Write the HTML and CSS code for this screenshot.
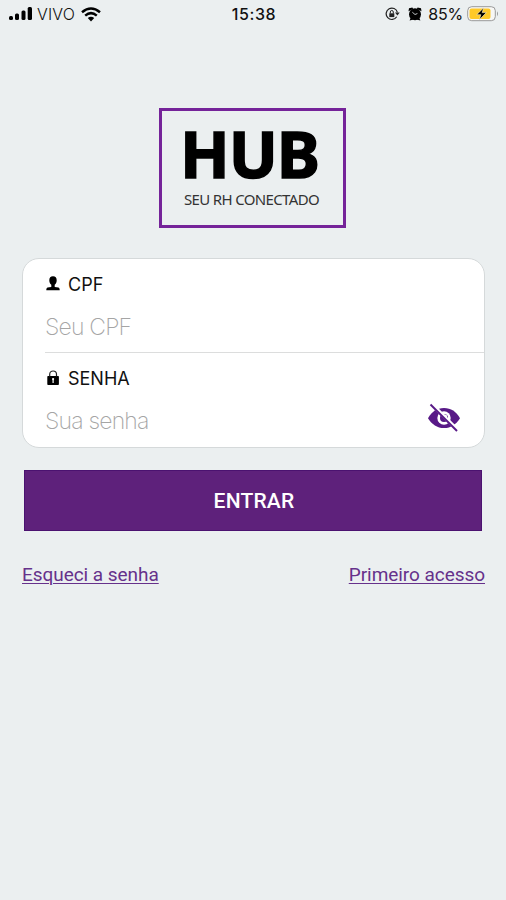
FILE: index.html
```html
<!DOCTYPE html>
<html lang="pt-BR">
<head>
<meta charset="utf-8">
<title>HUB</title>
<link rel="stylesheet" href="styles.css">
</head>
<body>
<header class="status">
  <div class="status-left">
    <svg class="signal" width="24" height="14" viewBox="0 0 24 14"><rect x="0" y="9" width="4" height="4" rx="1.5"/><rect x="6" y="6.5" width="4" height="6.5" rx="1.5"/><rect x="12.5" y="3.5" width="4" height="9.5" rx="1.5"/><rect x="18.7" y="0" width="4.3" height="13" rx="1.5"/></svg>
    <span class="carrier">VIVO</span>
    <svg class="wifi" width="20" height="15" viewBox="0 0 20 15" fill="none" stroke="#000" stroke-width="2.5"><path d="M1 5.3Q10-2.3 19 5.3M4.2 8.6Q10 3.7 15.8 8.6"/><path d="M10 14.5L6.8 11.1Q10 8.6 13.2 11.1Z" fill="#000" stroke="none"/></svg>
  </div>
  <time class="clock">15:38</time>
  <div class="status-right">
    <svg class="rotation" width="15" height="14" viewBox="0 0 15 14" fill="none" stroke="#222"><path d="M11.7 9.8A5.7 5.7 0 1 1 12.4 5.4" stroke-width="1.2"/><path d="M10 5.4h4.7l-2.3 3z" fill="#222" stroke="none"/><rect x="4.3" y="6.3" width="5" height="3.8" fill="#222" stroke="none"/><path d="M5.3 6.5V5a1.5 1.5 0 0 1 3 0v1.5"/></svg>
    <svg class="alarm" width="14" height="14" viewBox="0 0 14 14"><circle cx="7" cy="7.2" r="6"/><path d="M.5 4.3L1 1.3 4.4.4 5.2 2zM13.5 4.3L13 1.3 9.6.4 8.8 2zM1.6 13.5l1.2-3 2.8 2zM12.4 13.5l-1.2-3-2.8 2z"/><path d="M4.3 5.2L7 7.5l2.4-1" fill="none" stroke="#ecf0f1" stroke-width=".8"/></svg>
    <span class="percent">85%</span>
    <svg class="battery" width="32" height="16" viewBox="0 0 32 16"><rect x=".7" y=".7" width="27.6" height="14" rx="4" fill="#f7f7f5" stroke="#999" stroke-width="1"/><rect x="2.5" y="2.5" width="21" height="10.4" rx="2" fill="#ffc928"/><path d="M30 5.2q2 2.5 0 5z" fill="#999"/><path d="M16.7 1.8L9.7 8.7h4.1l-1.4 5 7-7.1h-4.2z" stroke="#fff4cc" stroke-width=".6"/></svg>
  </div>
</header>
<main class="login">
  <div class="logo">
    <h1 class="logo-name">HUB</h1>
    <p class="logo-tag">SEU RH CONECTADO</p>
  </div>
  <section class="card">
    <div class="field">
      <div class="label"><svg width="16" height="16" viewBox="0 0 16 16"><path d="M8 .2C5.500.2 4.300 1.800 4.300 4.200c0 2 .8 3.500 2 4.500v2.300L2.500 11.600C1.600 12 1.300 12.800 1.300 14.200h13.400c0-1.400-.3-2.200-1.200-2.600L9.700 11V8.700c1.200-1 2-2.500 2-4.500C11.700 1.800 10.500.2 8 .2z"/></svg><span>CPF</span></div>
      <div class="placeholder">Seu CPF</div>
    </div>
    <div class="field">
      <div class="label"><svg width="16" height="16" viewBox="0 0 16 16"><rect x="2.3" y="6" width="11.6" height="9" rx=".8"/><path d="M4.7 6.5V4.4a3.4 3.4 0 0 1 6.8 0v2.1" fill="none" stroke="#222" stroke-width="1.2"/><path d="M8.1 13V9.6" stroke="#fff" stroke-width="1.2"/><circle cx="8.1" cy="9.1" r="1.1" fill="#fff"/></svg><span>SENHA</span></div>
      <div class="placeholder">Sua senha</div>
      <svg class="eye" width="34" height="30" viewBox="0 0 34 30"><path d="M1 15.2C5 8.5 10 5 17 5s12 3.5 16 10.2C29 21.5 24 25 17 25S5 21.5 1 15.2z" fill="#581987"/><circle cx="17" cy="15" r="6.7" fill="#fff"/><circle cx="17" cy="15" r="4" fill="#581987"/><circle cx="18.2" cy="13.5" r="1.9" fill="#fff"/><path d="M4.5 1L31 27.5" stroke="#fff" stroke-width="3.8"/><path d="M3.5 1.5L30 28" stroke="#581987" stroke-width="1.9"/></svg>
    </div>
  </section>
  <button class="submit"><span>ENTRAR</span></button>
  <nav class="links"><a href="#">Esqueci a senha</a><a href="#">Primeiro acesso</a></nav>
</main>
</body>
</html>
```
FILE: styles.css
```css
* { box-sizing: border-box; }
body { margin: 0; min-height: 900px; background: #ebeff0; color: #111; font-family: Inter, "Liberation Sans", sans-serif; }
h1, p { margin: 0; }
svg { display: block; flex: none; }
.status { display: grid; grid-template-columns: 1fr auto 1fr; align-items: center; height: 28px; padding: 0 7px 0 9px; font-size: 16px; line-height: 20px; }
.status-left, .status-right { display: flex; align-items: center; }
.status-right { justify-content: flex-end; }
.carrier { margin-left: 4px; font-weight: 300; letter-spacing: .2px; }
.wifi { margin-left: 6px; }
.clock { font-weight: 500; letter-spacing: .6px; }
.alarm { margin-left: 7px; }
.percent { margin-left: 6px; font-weight: 400; letter-spacing: -.2px; }
.battery { margin-left: 4px; }
.rotation { margin-right: 1px; }
.login { padding: 80px 21px 0 22px; }
.logo { width: 187px; height: 120px; margin: 0 auto 0 137px; padding: 15px 0 0 21px; border: 3px solid #752399; }
.logo-name { margin-left: -3px; font: 700 65px/54px "Noto Sans", sans-serif; letter-spacing: -1.1px; color: #000; -webkit-text-stroke: 1.5px #000; }
.logo-tag { margin: 9px 0 0 1px; font: 400 15px/20px "Noto Sans", sans-serif; letter-spacing: -.65px; color: #333; white-space: nowrap; }
.card { height: 190px; margin-top: 30px; background: #fff; border: 1px solid #d5d9da; border-radius: 17px; }
.field { position: relative; height: 94px; margin-left: 22px; padding-top: 15px; }
.field + .field { height: 95px; margin-top: -1px; border-top: 1px solid #dcdddd; }
.label { display: flex; align-items: center; gap: 7px; height: 22px; font-size: 18px; line-height: 22px; }
.label svg { margin-top: -3px; }
.placeholder { margin-top: 17px; font-size: 23px; line-height: 28px; font-weight: 200; letter-spacing: -.8px; color: #a5a5a5; }
.eye { position: absolute; right: 23px; top: 50px; }
.submit { display: flex; align-items: center; justify-content: center; width: 458px; height: 61px; margin: 22px 0 0 2px; padding: 0; border: 1px solid #4b1270; background: #5e217b; color: #fff; font: 500 21px/28px Roboto, sans-serif; letter-spacing: .2px; }
.submit span { margin-left: 2px; }
.links { display: flex; justify-content: space-between; margin-top: 32px; font: 400 19px/24px Roboto, sans-serif; letter-spacing: -.05px; }
.links a { color: #66318b; text-decoration-thickness: 1px; text-underline-offset: 2px; }
```
